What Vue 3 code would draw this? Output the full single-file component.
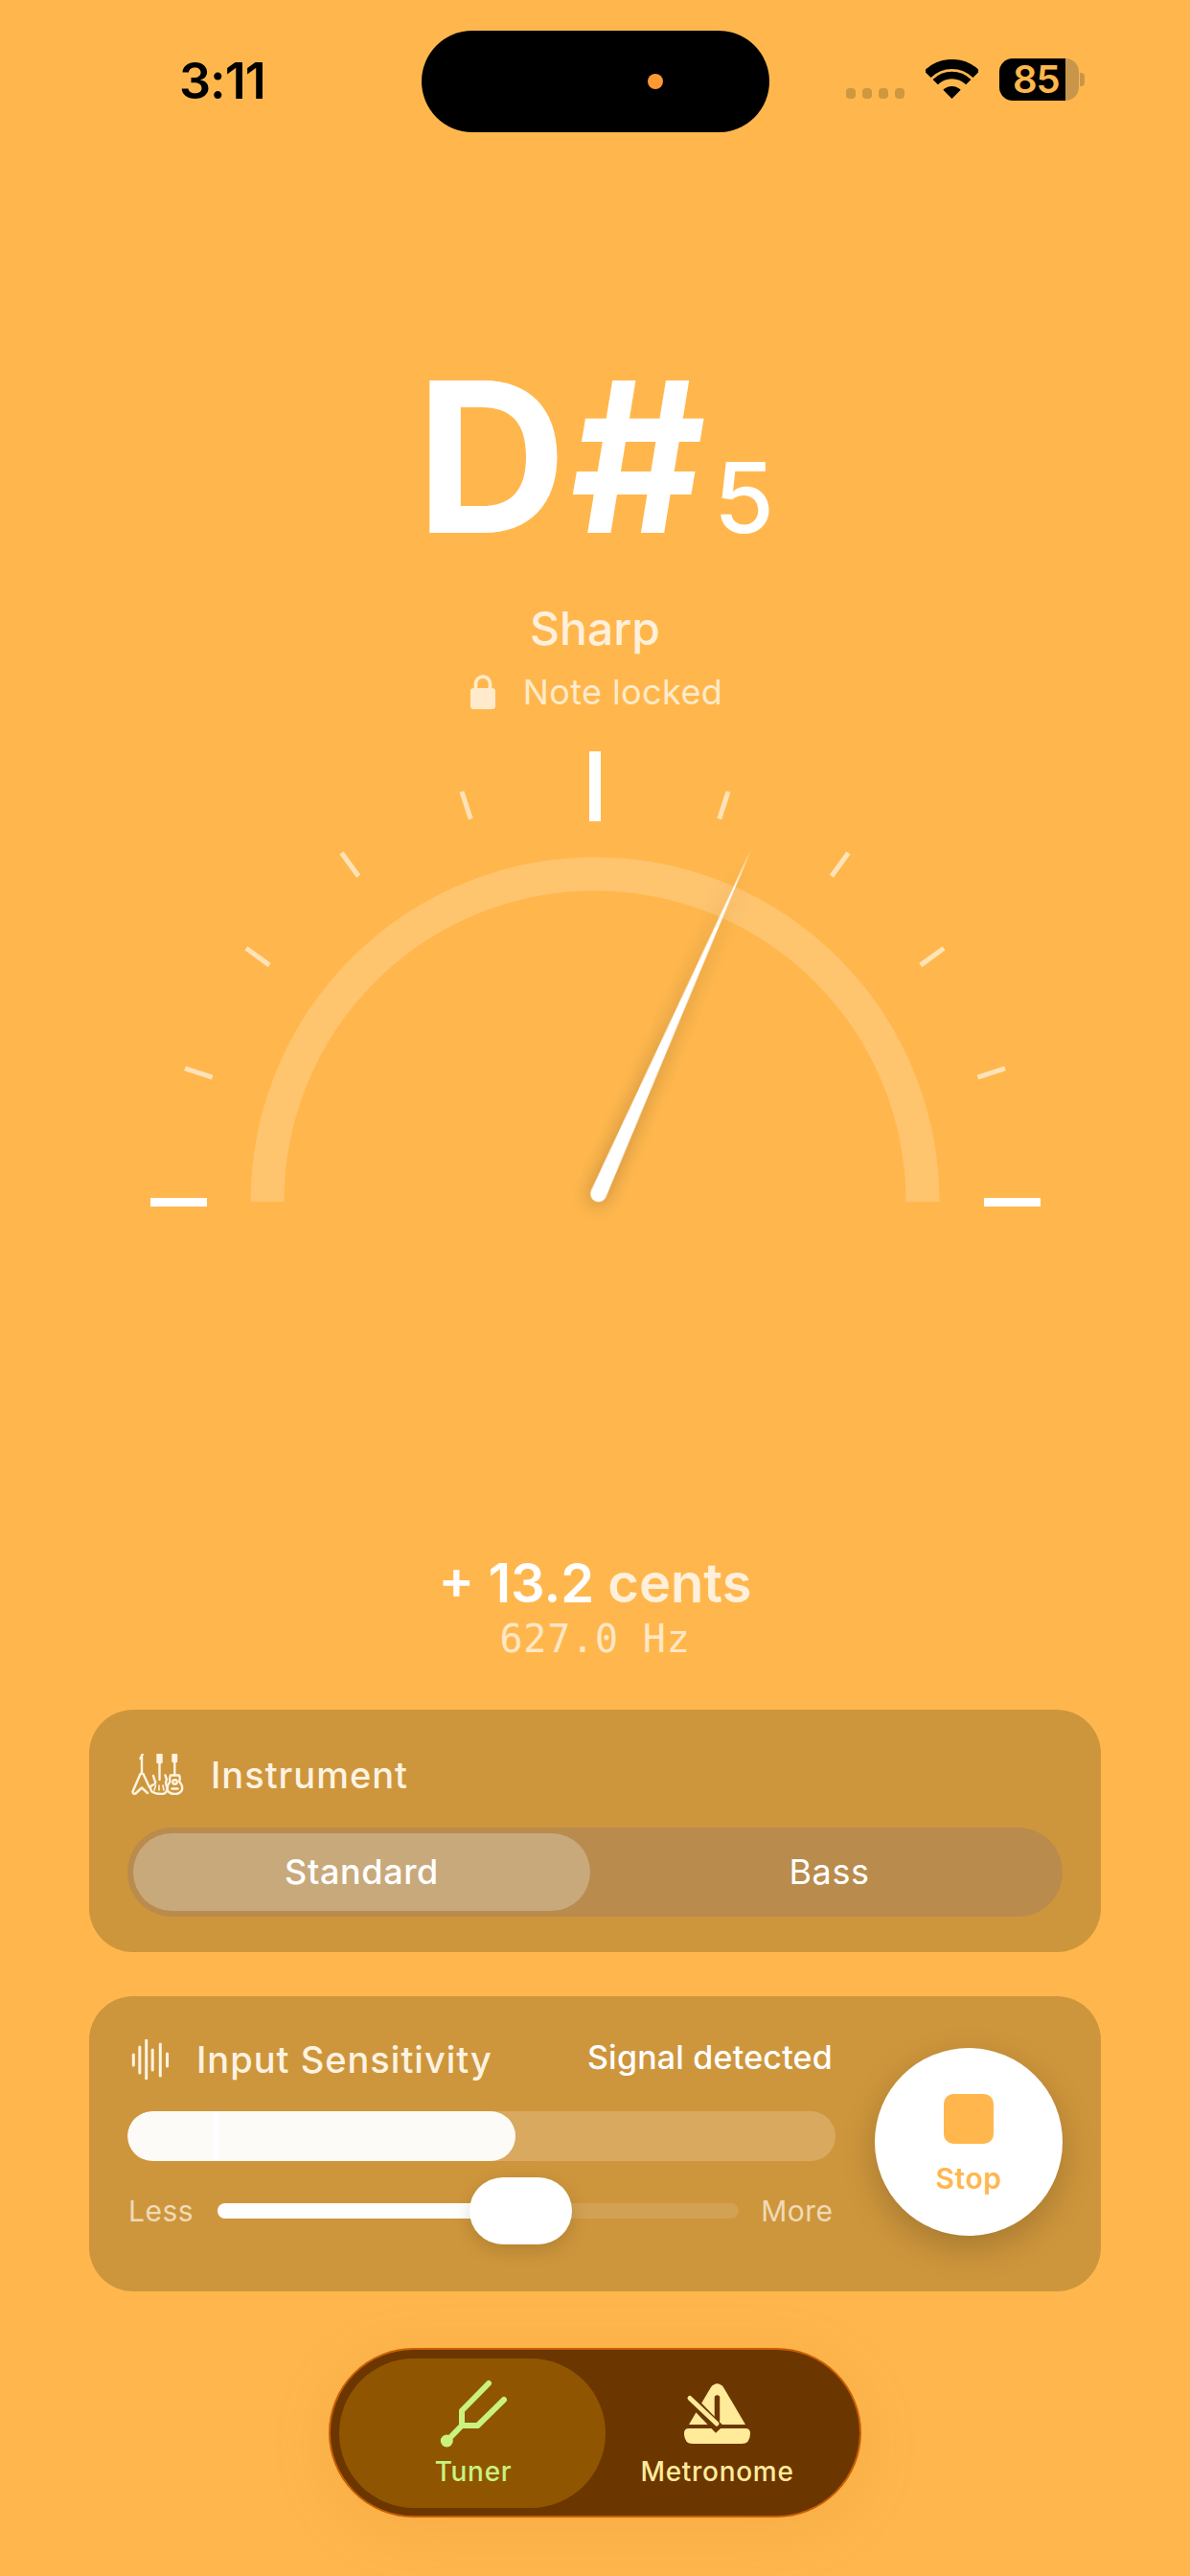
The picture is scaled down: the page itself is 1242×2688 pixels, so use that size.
<script setup>
const minorTicks = [-72, -54, -36, -18, 18, 36, 54, 72]
const waveBars = [
  { x: 139.3, y1: 2143, y2: 2154 },
  { x: 145.8, y1: 2135, y2: 2162 },
  { x: 152.7, y1: 2128, y2: 2168 },
  { x: 159.2, y1: 2138, y2: 2159 },
  { x: 167.3, y1: 2132, y2: 2165 },
  { x: 174.5, y1: 2142, y2: 2155 }
]
</script>

<template>
  <div class="page">
    <header class="status">
      <div class="time">3:11</div>
      <div class="island"><span class="island-dot"></span></div>
      <div class="status-right">
        <div class="signal"><i></i><i></i><i></i><i></i></div>
        <svg class="wifi" width="55" height="41" viewBox="0 0 55 41">
          <path d="M2 15.5A36 36 0 0 1 53 15.5" fill="none" stroke="#000" stroke-width="10" />
          <path d="M10.2 23.7A24.5 24.5 0 0 1 44.8 23.7" fill="none" stroke="#000" stroke-width="7.5" />
          <path d="M27.5 41L18.3 31.8A13 13 0 0 1 36.7 31.8Z" fill="#000" />
        </svg>
        <div class="battery">85</div>
        <span class="battery-cap"></span>
      </div>
    </header>

    <section class="note">
      <span class="note-name">D#</span><span class="note-octave">5</span>
    </section>
    <div class="state">Sharp</div>
    <div class="locked">
      <svg width="26" height="36" viewBox="0 0 26 36">
        <path d="M5.5 15V9.5a7.5 7.5 0 0 1 15 0V15" fill="none" stroke="#FFEBCB" stroke-width="3.6" />
        <rect x="0" y="14" width="26" height="22" rx="3.5" fill="#FFEBCB" />
      </svg>
      <span>Note locked</span>
    </div>

    <svg class="gauge" width="1242" height="520" viewBox="0 770 1242 520">
      <path d="M279 1253A342 342 0 0 1 963 1253" fill="none" stroke="#fff" stroke-opacity=".19" stroke-width="35" />
      <rect x="615" y="783" width="12" height="73" fill="#fff" />
      <rect x="157" y="1249" width="59" height="9" fill="#fff" />
      <rect x="1027" y="1249" width="59" height="9" fill="#fff" />
      <g transform="translate(621 1253)">
        <rect
          v-for="a in minorTicks"
          :key="a"
          x="-2.5"
          y="-450"
          width="5"
          height="30"
          fill="#FFE3B8"
          :transform="`rotate(${a})`"
        />
        <path class="needle" transform="rotate(23.9)" d="M0 -402L8.500 -9A8.500 8.500 0 0 1 -8.500 -9Z" fill="#fff" />
      </g>
    </svg>

    <div class="cents"><span class="cents-value">+ 13.2</span> <span class="cents-unit">cents</span></div>
    <div class="hz">627.0 Hz</div>

    <section class="card instrument">
      <div class="card-head">
        <svg class="guitars" width="55" height="43" viewBox="137 1829 55 43" fill="none" stroke="#FDF3E2" stroke-width="2.4" stroke-linejoin="round" stroke-linecap="round">
          <path d="M148 1831V1850M149 1829l-2.500 5" />
          <path d="M146.500 1850L138.500 1868.500Q138.500 1871.500 141.500 1870.500L148 1864.500L154 1870" />
          <path d="M149.500 1850L156 1864" />
          <path d="M164.500 1830H168.500V1838H164.500Z" fill="#FDF3E2" />
          <path d="M166.500 1838V1856" />
          <path d="M160 1852L161.500 1857Q164 1860 158.500 1862Q155.500 1864 158.500 1868.500Q163 1871.500 170 1871Q175 1869.500 174.500 1864Q172 1860 174 1856L172.500 1851.500" />
          <path d="M162.500 1862l-1.500 5M166 1862v5M170 1862l1 5" stroke-width="1.600" />
          <path d="M180.500 1830H184V1837H180.500Z" fill="#FDF3E2" />
          <path d="M182.300 1837V1851" />
          <path d="M178 1851.500H187Q188.500 1855 187 1858Q191 1862 190 1866.500Q188 1871 182.500 1871Q176.500 1871 174.500 1866.500Q174 1862 177.500 1858Q176.500 1855 178 1851.500Z" />
          <circle cx="182.500" cy="1858.500" r="2.200" />
          <path d="M179.500 1865.500H185.500" />
        </svg>
        <span class="card-title">Instrument</span>
      </div>
      <div class="segments">
        <div class="segment active"><span>Standard</span></div>
        <div class="segment plain"><span>Bass</span></div>
      </div>
    </section>

    <section class="card sensitivity">
      <div class="sens-main">
        <div class="sens-head">
          <svg class="wave" width="40" height="42" viewBox="137 2127 40 42" stroke="#FDF3E2" stroke-width="3" stroke-linecap="round">
            <line v-for="b in waveBars" :key="b.x" :x1="b.x" :x2="b.x" :y1="b.y1" :y2="b.y2" />
          </svg>
          <span class="card-title">Input Sensitivity</span>
          <span class="signal-text">Signal detected</span>
        </div>
        <div class="level"><div class="level-fill"><i class="level-mark"></i></div></div>
        <div class="slider-row">
          <span class="slider-label">Less</span>
          <div class="slider">
            <div class="slider-track"><div class="slider-fill"></div></div>
            <div class="slider-thumb"></div>
          </div>
          <span class="slider-label">More</span>
        </div>
      </div>
      <div class="stop">
        <span class="stop-square"></span>
        <span class="stop-label">Stop</span>
      </div>
    </section>

    <nav class="tabs">
      <div class="tab tab-active">
        <svg width="70" height="76" viewBox="460 2480 70 76" fill="none" stroke="#C9F27F" stroke-width="6" stroke-linecap="round" stroke-linejoin="round">
          <path d="M467.500 2546L483 2530V2514.500L511 2486" />
          <path d="M483 2530H499.500L527 2503" />
          <circle cx="467.300" cy="2546" r="6.500" fill="#C9F27F" stroke="none" />
        </svg>
        <span class="tab-label tuner">Tuner</span>
      </div>
      <div class="tab tab-right">
        <svg width="75" height="76" viewBox="712 2480 75 76">
          <path d="M720 2529L743 2490Q749.500 2482.500 756 2490L779 2529Z" fill="#FFEB99" />
          <path d="M715 2538Q715 2533 720 2533H779Q784 2533 784 2538Q784 2549 775 2549H724Q715 2549 715 2538Z" fill="#FFEB99" />
          <path d="M749.500 2501V2524" stroke="#6B3600" stroke-width="5.500" stroke-linecap="round" fill="none" />
          <path d="M726 2507L752 2534" stroke="#6B3600" stroke-width="11" fill="none" />
          <path d="M721 2501.500L749 2528" stroke="#FFEB99" stroke-width="5" stroke-linecap="round" fill="none" />
        </svg>
        <span class="tab-label metro">Metronome</span>
      </div>
    </nav>
  </div>
</template>

<style>
html, body { margin: 0; background: #FFB74D; }
</style>

<style scoped>
.page {
  width: 1242px;
  height: 2688px;
  overflow: hidden;
  display: flex;
  flex-direction: column;
  align-items: center;
  background: #FFB74D;
  color: #fff;
  font-family: Inter, "Noto Sans", sans-serif;
}
.status {
  width: 100%;
  padding-top: 32px;
  display: grid;
  grid-template-columns: 440px 363px 1fr;
  align-items: start;
}
.time {
  padding: 23px 0 0 187px;
  font-size: 52px;
  line-height: 60px;
  font-weight: 600;
  color: #000;
  letter-spacing: -1px;
}
.island {
  height: 106px;
  border-radius: 53px;
  background: #000;
  display: flex;
  align-items: center;
  justify-content: flex-end;
  padding-right: 111px;
}
.island-dot { width: 16px; height: 16px; border-radius: 50%; background: #FF9933; }
.status-right {
  padding: 29px 0 0 80px;
  display: flex;
  align-items: flex-end;
}
.signal { display: flex; gap: 7px; margin: 0 22px 2px 0; }
.signal i { width: 10px; height: 11px; border-radius: 4px; background: #CF983F; }
.wifi { margin: 0 22px 2px 0; }
.battery {
  width: 83px;
  height: 44px;
  box-sizing: border-box;
  padding-left: 14px;
  border-radius: 14px;
  background: linear-gradient(90deg, #000 69px, #C8964A 69px);
  color: #FFB74D;
  font-size: 40px;
  font-weight: 600;
  line-height: 44px;
  letter-spacing: -1px;
}
.battery-cap {
  width: 5px;
  height: 14px;
  margin: 0 0 15px 1px;
  border-radius: 0 4px 4px 0;
  background: #C8964A;
}
.note {
  margin-top: 239px;
  height: 200px;
  display: flex;
  align-items: baseline;
  justify-content: center;
}
.note-name { font-size: 218px; line-height: 200px; font-weight: 700; letter-spacing: 4px; }
.note-octave { font-size: 102px; line-height: 100px; font-weight: 500; margin-left: 4px; }
.state {
  margin-top: 49px;
  font-size: 48px;
  line-height: 60px;
  font-weight: 500;
  color: #FFF0DC;
}
.locked {
  margin-top: 14px;
  height: 44px;
  padding-left: 3px;
  display: flex;
  align-items: center;
  gap: 29px;
  font-size: 36px;
  line-height: 44px;
  letter-spacing: .4px;
  color: #FFEBCB;
}
.gauge { margin-top: 27px; flex: none; display: block; overflow: visible; }
.needle { filter: drop-shadow(0 4px 10px rgba(0, 0, 0, .25)); }
.cents {
  margin-top: 327px;
  font-size: 56px;
  line-height: 68px;
  font-weight: 600;
}
.cents-unit { color: #FFF0DC; }
.hz {
  font-family: "DejaVu Sans Mono", "Liberation Mono", monospace;
  font-size: 40px;
  line-height: 48px;
  letter-spacing: .8px;
  color: #FFE7C6;
}
.card {
  width: 1056px;
  box-sizing: border-box;
  border-radius: 46px;
  background: #CE963C;
  flex: none;
}
.instrument {
  margin-top: 50px;
  height: 253px;
  padding: 46px 40px 0;
}
.card-head { display: flex; align-items: center; height: 43px; margin-bottom: 34px; }
.guitars { margin-left: 4px; margin-right: 28px; flex: none; }
.card-title { font-size: 38px; line-height: 46px; font-weight: 500; letter-spacing: 1px; color: #FDF3E2; }
.segments {
  height: 93px;
  box-sizing: border-box;
  padding: 6px;
  border-radius: 47px;
  background: #B98B4D;
  display: grid;
  grid-template-columns: 477px 1fr;
}
.segment {
  display: flex;
  align-items: center;
  justify-content: center;
  font-size: 36px;
  line-height: 40px;
  padding-bottom: 2px;
  box-sizing: border-box;
  letter-spacing: .6px;
  border-radius: 41px;
}
.segment.active { background: #C8A97C; font-weight: 500; }
.segment.plain { padding-left: 12px; }
.sensitivity {
  margin-top: 46px;
  height: 308px;
  padding: 45px 40px 49px;
  display: flex;
  align-items: center;
  gap: 41px;
}
.sens-main { width: 739px; flex: none; }
.sens-head { display: flex; align-items: center; height: 42px; margin-bottom: 33px; padding-right: 3px; }
.wave { margin-left: 4px; margin-right: 28px; flex: none; }
.signal-text { margin-left: auto; font-size: 34px; font-weight: 500; letter-spacing: .2px; margin-top: -6px; }
.level {
  height: 52px;
  border-radius: 26px;
  background: #D9A95F;
  overflow: hidden;
  margin-bottom: 17px;
}
.level-fill {
  position: relative;
  width: 405px;
  height: 52px;
  border-radius: 26px;
  background: #FCFBF7;
}
.level-mark { position: absolute; left: 90px; top: 0; width: 5px; height: 52px; background: #fff; }
.slider-row { display: flex; align-items: center; height: 70px; padding-left: 1px; padding-right: 3px; justify-content: space-between; }
.slider-label { font-size: 30px; letter-spacing: .5px; color: #F0DAB8; }
.slider { position: relative; width: 544px; height: 70px; display: flex; align-items: center; margin-left: 25px; margin-right: 23px; flex: none; }
.slider-track {
  width: 100%;
  height: 16px;
  border-radius: 8px;
  background: #D3A153;
  overflow: hidden;
}
.slider-fill { width: 290px; height: 16px; background: #fff; }
.slider-thumb {
  position: absolute;
  left: 263px;
  top: 0;
  width: 107px;
  height: 70px;
  border-radius: 35px;
  background: #fff;
  box-shadow: 0 6px 20px rgba(0, 0, 0, .14);
}
.stop {
  width: 196px;
  height: 196px;
  flex: none;
  box-sizing: border-box;
  padding-top: 48px;
  border-radius: 50%;
  background: #fff;
  box-shadow: 0 12px 36px rgba(0, 0, 0, .2);
  display: flex;
  flex-direction: column;
  align-items: center;
}
.stop-square { width: 52px; height: 52px; border-radius: 10px; background: #FFB74D; }
.stop-label { margin-top: 18px; font-size: 30px; line-height: 36px; font-weight: 600; letter-spacing: .5px; color: #FFB74D; }
.tabs {
  margin-top: 59px;
  width: 556px;
  height: 177px;
  box-sizing: border-box;
  padding: 9px;
  border: 2px solid #C85F00;
  border-radius: 89px;
  background: #6B3600;
  box-shadow: 0 12px 70px rgba(160, 80, 0, .1);
  display: flex;
  flex: none;
}
.tab { display: flex; flex-direction: column; align-items: center; padding-top: 20px; height: 156px; box-sizing: border-box; }
.tab svg { display: block; }
.tab-active { width: 278px; padding-left: 2px; background: #8F5500; border-radius: 78px; }
.tab-right { flex: 1; padding-right: 23px; }
.tab-label { margin-top: 5px; font-size: 28px; line-height: 34px; font-weight: 500; letter-spacing: .7px; }
.tuner { color: #C9F27F; }
.metro { color: #FFEB99; }
</style>
